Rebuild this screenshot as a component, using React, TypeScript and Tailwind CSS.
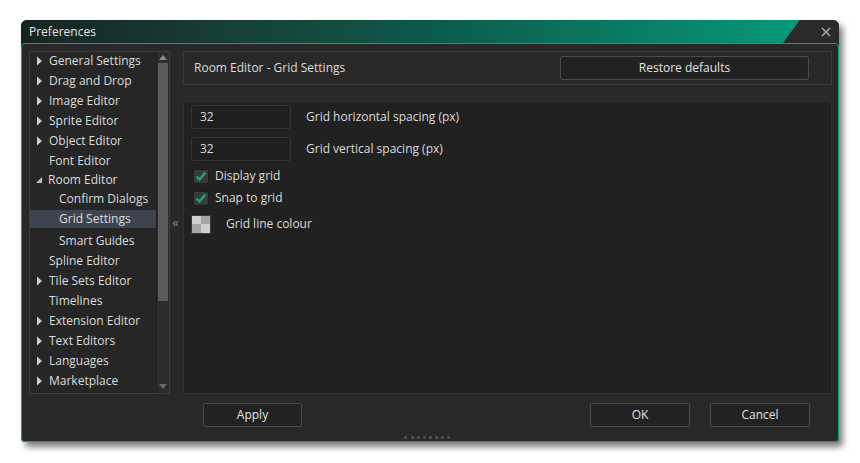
const tree = [
  { label: "General Settings", arrow: "right", h: "h-[18px]" },
  { label: "Drag and Drop", arrow: "right", h: "h-[20px]" },
  { label: "Image Editor", arrow: "right", h: "h-[20px]" },
  { label: "Sprite Editor", arrow: "right", h: "h-[20px]" },
  { label: "Object Editor", arrow: "right", h: "h-[20px]" },
  { label: "Font Editor", arrow: "none", h: "h-[20px]" },
  { label: "Room Editor", arrow: "down", h: "h-[19px]" },
  { label: "Confirm Dialogs", arrow: "sub", h: "h-[19px]" },
  { label: "Grid Settings", arrow: "sub", h: "h-[20px]", active: true },
  { label: "Smart Guides", arrow: "sub", h: "h-[22px]" },
  { label: "Spline Editor", arrow: "none", h: "h-[20px]" },
  { label: "Tile Sets Editor", arrow: "right", h: "h-[20px]" },
  { label: "Timelines", arrow: "none", h: "h-[20px]" },
  { label: "Extension Editor", arrow: "right", h: "h-[20px]" },
  { label: "Text Editors", arrow: "right", h: "h-[20px]" },
  { label: "Languages", arrow: "right", h: "h-[20px]" },
  { label: "Marketplace", arrow: "right", h: "h-[20px]" },
];

const Arrow = ({ kind }: { kind: string }) => {
  if (kind === "right")
    return (
      <svg width="13" height="10" viewBox="0 0 13 10" className="shrink-0 ml-[6px]">
        <path d="M1 0.5 L6 5 L1 9.5 Z" fill="#cfcfcf" />
      </svg>
    );
  if (kind === "down")
    return (
      <svg width="13" height="10" viewBox="0 0 13 10" className="shrink-0 ml-[5px]">
        <path d="M7 2 L7 8 L1 8 Z" fill="#bdbdbd" />
      </svg>
    );
  if (kind === "sub") return <div className="w-[29px] shrink-0" />;
  return <div className="w-[19px] shrink-0" />;
};

const Check = () => (
  <div className="w-[16px] h-[15px] bg-[#3a3a3a] border border-[#1c1c1c] rounded-[2px] flex items-center justify-center">
    <svg width="12" height="10" viewBox="0 0 12 10">
      <path d="M1.5 5.5 L4.5 8.5 L10.5 1.5" stroke="#19a968" strokeWidth="2.4" fill="none" />
    </svg>
  </div>
);

const Btn = ({ label, w }: { label: string; w: string }) => (
  <div className={`${w} h-[24px] bg-[#222222] border border-[#4a4a4a] rounded-[2px] flex items-center justify-center text-[#e2e2e2]`}>
    {label}
  </div>
);

export default function App() {
  return (
    <div className="w-[860px] h-[463px] bg-white pt-[20px] pl-[21px] text-[12px] text-[#dcdcdc] font-['Open_Sans',sans-serif]">
      <div className="w-[818px] h-[422px] flex flex-col rounded-t-[6px] rounded-b-[4px] bg-[#262626] shadow-[4px_5px_6px_rgba(0,0,0,0.5)]">
        {/* title bar */}
        <div className="relative h-[23px] shrink-0 rounded-t-[6px] bg-linear-to-r from-[#162422] via-[#0b5a4b] to-[#03a07f] flex items-center pl-[8px] text-[#e4e4e4]">
          Preferences
          <div className="absolute right-0 top-0 h-full w-[56px] rounded-tr-[6px] bg-[#2a2a2a] [clip-path:polygon(30%_0,100%_0,100%_100%,0_100%)] flex items-center justify-end pr-[8px]">
            <svg width="10" height="10" viewBox="0 0 10 10">
              <path d="M1 1 L9 9 M9 1 L1 9" stroke="#b5b5b5" strokeWidth="1.2" />
            </svg>
          </div>
        </div>

        {/* body */}
        <div className="flex-1 flex flex-col border border-[#14a06f] rounded-[4px] bg-[#282828] pt-[7px] pl-[7px] pr-[6px]">
          <div className="flex h-[343px]">
            {/* tree */}
            <div className="w-[141px] h-full border border-[#3b3b3b] bg-[#262626] flex">
              <div className="w-[126px] flex flex-col">
                {tree.map((t) => (
                  <div key={t.label} className={`${t.h} flex items-end`}>
                    <div className={`h-[18px] w-full flex items-center ${t.active ? "bg-[#3d4450]" : ""}`}>
                      <Arrow kind={t.arrow} />
                      <span className="whitespace-nowrap">{t.label}</span>
                    </div>
                  </div>
                ))}
              </div>
              <div className="w-[13px] h-full bg-[#2c2c2c] border-l border-[#1f1f1f] flex flex-col items-center">
                <svg width="8" height="6" viewBox="0 0 8 6" className="mt-[3px]">
                  <path d="M4 0 L8 5 L0 5 Z" fill="#8a8a8a" />
                </svg>
                <div className="w-[10px] h-[238px] mt-[2px] bg-[#5b5b5b]" />
                <div className="flex-1" />
                <svg width="8" height="6" viewBox="0 0 8 6" className="mb-[3px]">
                  <path d="M0 0 L8 0 L4 5 Z" fill="#6a6a6a" />
                </svg>
              </div>
            </div>

            {/* collapse handle */}
            <div className="w-[13px] flex items-center justify-center text-[#8a8a8a] text-[13px] pr-[2px]">
              «
            </div>

            {/* right side */}
            <div className="w-[649px] flex flex-col">
              <div className="h-[34px] border border-[#3a3a3a] flex items-center justify-between pl-[10px] pr-[22px]">
                <span>Room Editor - Grid Settings</span>
                <Btn label="Restore defaults" w="w-[249px]" />
              </div>
              <div className="mt-[16px] flex-1 border border-[#303030] bg-[#212121] pt-[3px] pl-[7px] flex flex-col">
                <div className="flex items-center h-[24px]">
                  <div className="w-[100px] h-[24px] bg-[#1f1f1f] border border-[#333333] rounded-[2px] flex items-center pl-[8px]">32</div>
                  <span className="ml-[15px]">Grid horizontal spacing (px)</span>
                </div>
                <div className="flex items-center h-[24px] mt-[8px]">
                  <div className="w-[100px] h-[24px] bg-[#1f1f1f] border border-[#333333] rounded-[2px] flex items-center pl-[8px]">32</div>
                  <span className="ml-[15px]">Grid vertical spacing (px)</span>
                </div>
                <div className="flex items-center h-[22px] mt-[4px] pl-[2px]">
                  <Check />
                  <span className="ml-[6px]">Display grid</span>
                </div>
                <div className="flex items-center h-[22px] pl-[2px]">
                  <Check />
                  <span className="ml-[6px]">Snap to grid</span>
                </div>
                <div className="flex items-center h-[30px]">
                  <div className="w-[20px] h-[19px] grid grid-cols-2 border border-[#3a3a3a]">
                    <div className="bg-[#cfcfcf]" />
                    <div className="bg-[#a5a5a5]" />
                    <div className="bg-[#a5a5a5]" />
                    <div className="bg-[#cfcfcf]" />
                  </div>
                  <span className="ml-[15px]">Grid line colour</span>
                </div>
              </div>
            </div>
          </div>

          {/* buttons */}
          <div className="flex items-center mt-[9px] h-[24px]">
            <div className="ml-[174px]">
              <Btn label="Apply" w="w-[99px]" />
            </div>
            <div className="flex-1" />
            <Btn label="OK" w="w-[100px]" />
            <div className="ml-[20px] mr-[22px]">
              <Btn label="Cancel" w="w-[100px]" />
            </div>
          </div>
          <div className="flex-1 flex items-end justify-center pb-[2px] pr-[8px]">
            <div className="w-[46px] h-0 border-t-[3px] border-dotted border-[#4d4d4d]" />
          </div>
        </div>
      </div>
    </div>
  );
}
